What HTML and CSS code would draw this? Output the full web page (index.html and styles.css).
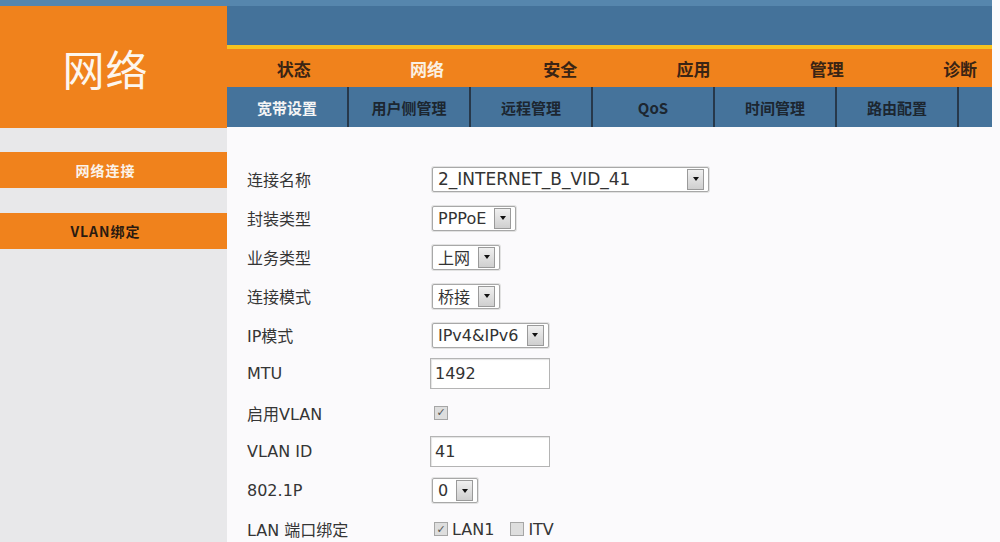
FILE: index.html
```html
<!DOCTYPE html>
<html>
	<head>
		<meta charset="utf-8">
		<link rel="stylesheet" href="styles.css">
	</head>
	<body>
		<div class="top-strip"></div>
		<div class="page">
			<div class="side">
				<div class="logo">网络</div>
				<div class="side-menu">
					<div class="side-item side-item-active">网络连接</div>
					<div class="side-item">VLAN绑定</div>
				</div>
			</div>
			<div class="main">
				<div class="header">
					<div class="banner"></div>
					<div class="nav">
						<span class="nav-item">状态</span>
						<span class="nav-item nav-item-active">网络</span>
						<span class="nav-item">安全</span>
						<span class="nav-item">应用</span>
						<span class="nav-item">管理</span>
						<span class="nav-item">诊断</span>
					</div>
					<div class="subnav">
						<span class="sub-item sub-item-active">宽带设置</span>
						<span class="sub-item">用户侧管理</span>
						<span class="sub-item">远程管理</span>
						<span class="sub-item">QoS</span>
						<span class="sub-item">时间管理</span>
						<span class="sub-item">路由配置</span>
						<span class="sub-item"></span>
					</div>
				</div>
				<div class="content">
					<div class="row">
						<span class="label">连接名称</span>
						<span class="select select-wide"><span class="select-text">2_INTERNET_B_VID_41</span><span class="arrow"></span></span>
					</div>
					<div class="row">
						<span class="label">封装类型</span>
						<span class="select"><span class="select-text">PPPoE</span><span class="arrow"></span></span>
					</div>
					<div class="row">
						<span class="label">业务类型</span>
						<span class="select"><span class="select-text">上网</span><span class="arrow"></span></span>
					</div>
					<div class="row">
						<span class="label">连接模式</span>
						<span class="select"><span class="select-text">桥接</span><span class="arrow"></span></span>
					</div>
					<div class="row">
						<span class="label">IP模式</span>
						<span class="select"><span class="select-text">IPv4&amp;IPv6</span><span class="arrow"></span></span>
					</div>
					<div class="row">
						<span class="label">MTU</span>
						<span class="text-input">1492</span>
					</div>
					<div class="row">
						<span class="label">启用VLAN</span>
						<span class="check checked"></span>
					</div>
					<div class="row">
						<span class="label">VLAN ID</span>
						<span class="text-input">41</span>
					</div>
					<div class="row">
						<span class="label">802.1P</span>
						<span class="select"><span class="select-text">0</span><span class="arrow"></span></span>
					</div>
					<div class="row">
						<span class="label">LAN 端口绑定</span>
						<span class="check checked"></span><span class="check-label">LAN1</span>
						<span class="check"></span><span class="check-label">ITV</span>
					</div>
				</div>
			</div>
		</div>
	</body>
</html>
```

FILE: styles.css
```css
body {
	margin: 0;
	background: #fbfafc;
	font-family: 'DejaVu Sans', 'Noto Sans CJK SC', sans-serif;
	overflow: hidden;
}

.top-strip {
	height: 6px;
	width: 992px;
	background: #5686ad;
}

.page {
	display: flex;
	height: 536px;
}

/* left column */

.side {
	width: 227px;
	flex: none;
	background: #e8e8ea;
}

.logo {
	height: 122px;
	background: #f0821c;
	color: #fdf6ee;
	font-family: 'Noto Sans CJK SC', sans-serif;
	font-size: 42px;
	display: flex;
	align-items: center;
	justify-content: center;
	padding-right: 16px;
	letter-spacing: 1px;
}

.side-menu {
	padding-top: 24px;
	display: flex;
	flex-direction: column;
	gap: 25px;
}

.side-item {
	height: 36px;
	background: #f0821c;
	color: #2a1a10;
	font-family: 'Noto Sans CJK SC', sans-serif;
	font-weight: bold;
	font-size: 14px;
	letter-spacing: 1px;
	display: flex;
	align-items: center;
	justify-content: center;
	padding-right: 16px;
}

.side-item-active {
	color: #fbf3ea;
}

/* header */

.main {
	width: 765px;
	flex: none;
}

.header {
	overflow: hidden;
}

.banner {
	height: 39px;
	background: #44729a;
	border-bottom: 4px solid #f6c21e;
}

.nav {
	height: 38px;
	background: #f0821c;
	display: flex;
	align-items: center;
	font-family: 'Noto Sans CJK SC', sans-serif;
	font-weight: bold;
	font-size: 17px;
	color: #3a2414;
}

.nav-item {
	width: 133.3px;
	flex: none;
	text-align: center;
}

.nav-item-active {
	color: #fbf0e2;
}

.subnav {
	height: 40px;
	background: #45739b;
	display: flex;
	font-family: 'Noto Sans CJK SC', sans-serif;
	font-weight: bold;
	font-size: 15px;
	color: #1c2630;
}

.sub-item {
	width: 120px;
	flex: none;
	border-right: 2px solid #27384a;
	display: flex;
	align-items: center;
	justify-content: center;
}

.sub-item-active {
	color: #f5f5f5;
}

/* form */

.content {
	padding: 33px 0 0 20px;
}

.row {
	height: 38.9px;
	display: flex;
	align-items: center;
	font-size: 16px;
	color: #353535;
}

.label {
	width: 183px;
	flex: none;
}

.select {
	height: 23px;
	border: 1px solid #a8a8a8;
	border-radius: 2px;
	background: #fff;
	display: inline-flex;
	align-items: center;
	margin-left: 2px;
	padding-right: 4px;
	box-shadow: 0 0 0 1px #e2e2e2;
}

.select-wide {
	width: 271px;
}

.select-text {
	padding: 0 8px 0 5px;
	flex: 1;
	color: #333;
}

.select-wide .select-text {
	font-size: 17px;
}

.arrow {
	width: 15px;
	height: 19px;
	border: 1px solid #9a9a9a;
	background: linear-gradient(#f0f0f0, #cfcfcf);
	display: flex;
	align-items: center;
	justify-content: center;
}

.arrow::after {
	content: '';
	border-left: 3.5px solid transparent;
	border-right: 3.5px solid transparent;
	border-top: 4px solid #111;
}

.text-input {
	width: 114px;
	height: 29px;
	border: 1px solid #b4b4b4;
	background: #fff;
	padding-left: 4px;
	display: flex;
	align-items: center;
	box-shadow: inset 1px 1px 1px #e4e4e4;
	color: #333;
}

.check {
	width: 12px;
	height: 12px;
	border: 1px solid #a6a6a6;
	background: #dedede;
	margin-left: 4px;
	display: inline-flex;
	align-items: center;
	justify-content: center;
	font-size: 11px;
	color: #555;
	flex: none;
}

.checked::after {
	content: '✓';
}

.check-label {
	margin-left: 4px;
	margin-right: 12px;
}
```
